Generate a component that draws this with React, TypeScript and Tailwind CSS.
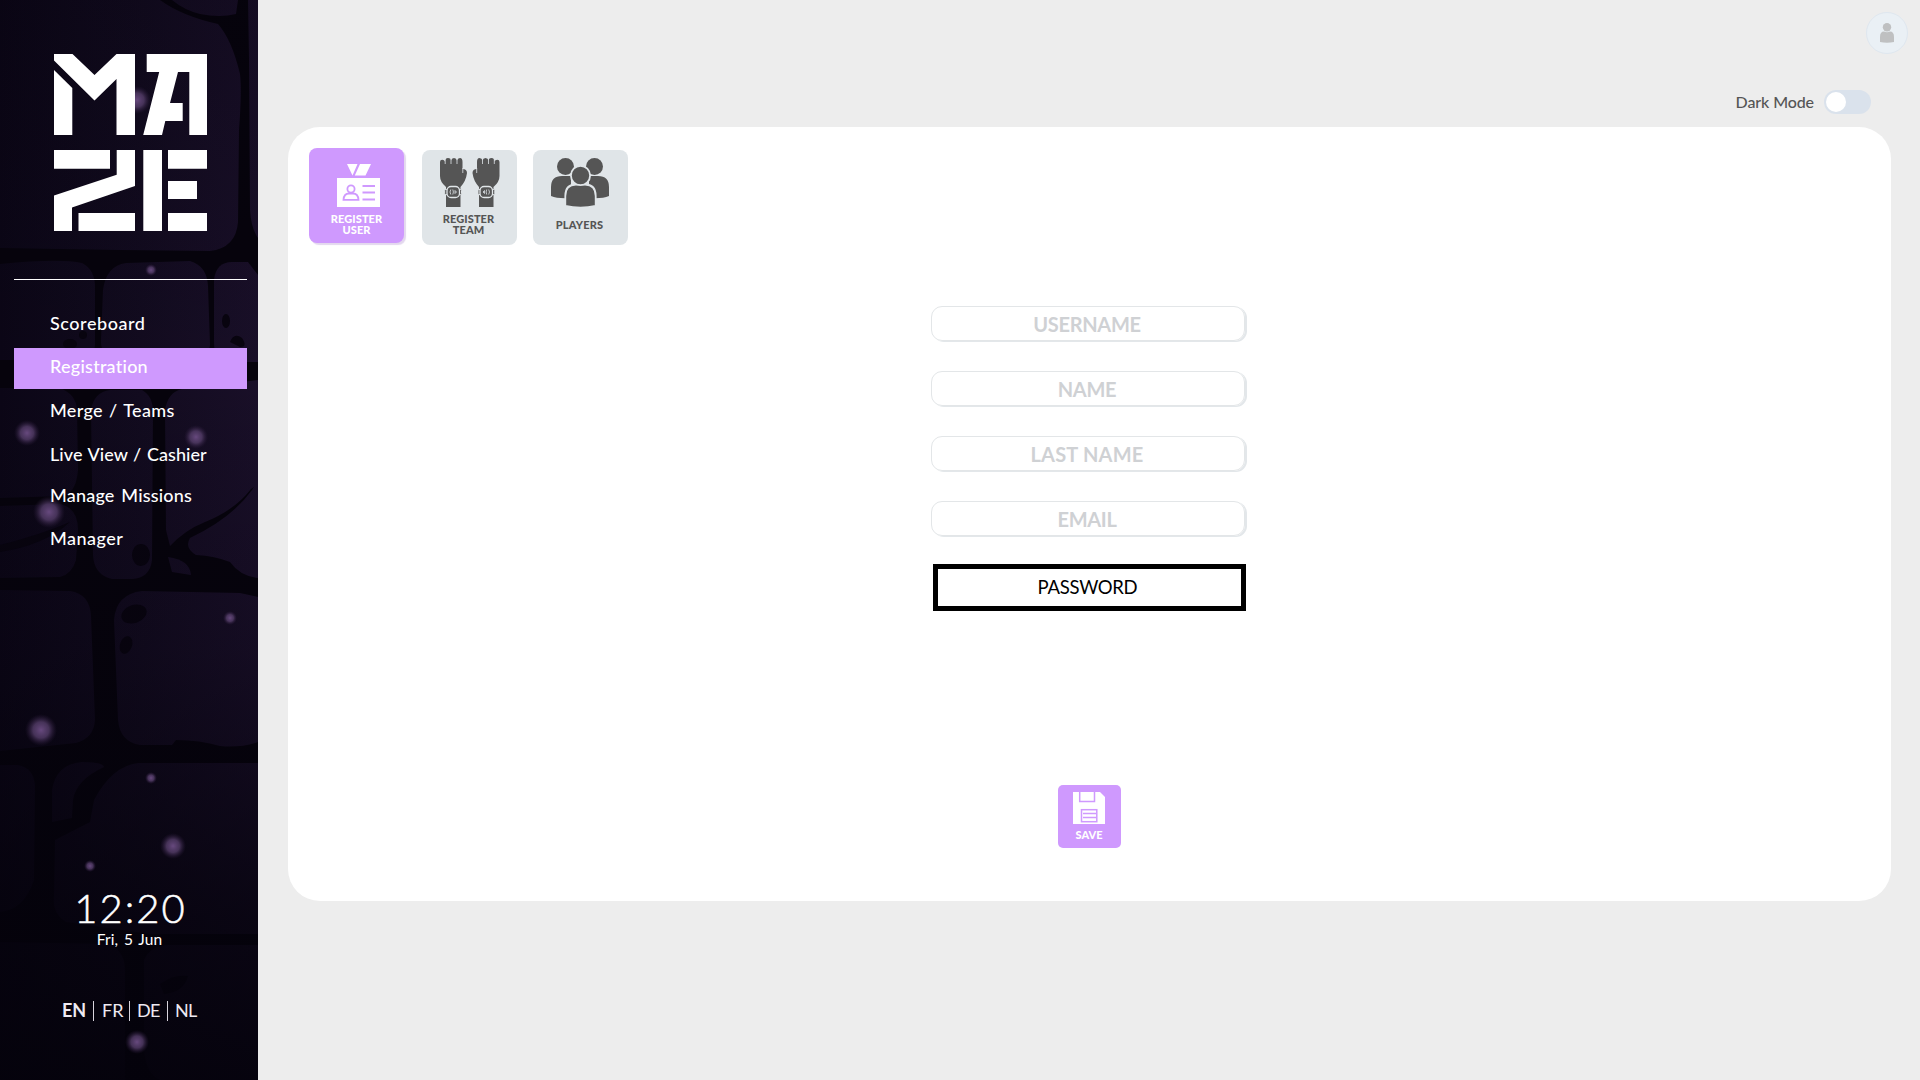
import React from "react";

const orbs: [number, number, number][] = [
  [137, 100, 14], [151, 270, 6], [27, 433, 13], [196, 437, 12], [49, 512, 16],
  [230, 618, 7], [41, 730, 16], [151, 778, 6], [173, 846, 13], [90, 866, 6], [137, 1042, 12],
];

function Wall() {
  return (
    <svg className="absolute inset-0" width="258" height="1080" viewBox="0 0 258 1080" aria-hidden="true">
      <defs>
        <linearGradient id="stone" gradientUnits="userSpaceOnUse" x1="0" y1="0" x2="258" y2="0">
          <stop offset="0" stopColor="#0b0616" />
          <stop offset="0.55" stopColor="#120b1f" />
          <stop offset="1" stopColor="#190f28" />
        </linearGradient>
        <linearGradient id="fade" x1="0" y1="0" x2="0" y2="1">
          <stop offset="0" stopColor="#04020b" stopOpacity="0.2" />
          <stop offset="0.35" stopColor="#04020b" stopOpacity="0" />
          <stop offset="0.6" stopColor="#04020b" stopOpacity="0.2" />
          <stop offset="0.85" stopColor="#04020b" stopOpacity="0.72" />
          <stop offset="1" stopColor="#04020b" stopOpacity="0.9" />
        </linearGradient>
        <radialGradient id="orb">
          <stop offset="0" stopColor="#67497e" />
          <stop offset="0.5" stopColor="#503a64" stopOpacity="0.85" />
          <stop offset="1" stopColor="#2c1b3c" stopOpacity="0" />
        </radialGradient>
      </defs>
      <rect width="258" height="1080" fill="#06030c" />
      <g fill="url(#stone)">
        <path d="M0 0H160Q182 16 218 24Q232 40 240 74Q242 90 239 130L238 222Q236 248 210 251L120 250L0 248Z" />
        <path d="M172 0H238L236 14Q220 18 200 14Q184 10 172 0Z" />
        <path d="M248 0H258V238Q251 228 250 210L249 60Z" />
        <path d="M0 264Q60 258 82 263Q96 270 95 290L95 345Q94 359 78 360H0Z" />
        <path d="M103 290Q106 266 126 263L190 261Q207 266 208 286L210 345Q208 360 195 360L118 360Q100 356 101 340Z" />
        <path d="M214 280Q216 262 232 262H248L258 275V362H222Q214 360 214 340Z" />
        <path d="M0 388H60Q76 394 77 410L78 470Q76 494 62 496L0 498Z" />
        <path d="M0 506L60 504Q78 508 78 530L76 560Q72 574 60 577L0 578Z" />
        <path d="M91 410Q94 392 110 390H142Q153 396 153 412L152 560Q150 578 132 579H112Q94 575 93 555Z" />
        <path d="M165 410Q168 392 182 389L258 380V484L251 489Q235 510 205 522Q185 530 170 546L166 530Z" />
        <path d="M258 480V578Q240 576 230 562Q215 556 196 555Q184 548 190 538Q232 518 252 490Z" />
        <path d="M168 557Q190 560 191 575L172 572Z" />
        <path d="M0 590L70 591Q90 594 91 616L95 720Q94 738 76 743L0 751Z" />
        <path d="M114 620Q116 594 142 591L240 593L258 597V742Q240 748 220 746Q200 740 176 740L172 745L140 745Q120 742 118 720Z" />
        <path d="M0 765H18Q34 768 35 786L34 880Q24 910 0 912Z" />
        <path d="M52 790Q56 764 82 762Q103 762 104 767Q76 780 73 800L72 818L52 822Z" />
        <path d="M94 800Q112 766 138 763H258V934H150L66 922Q52 914 54 896L55 840L90 822Z" />
        <path d="M0 942L110 944Q125 952 125 970V1080H0Z" />
        <path d="M144 960Q150 946 168 945H258V1080H160Q146 1074 144 1050Z" />
      </g>
      <g fill="#08040f">
        <ellipse cx="226" cy="321" rx="4" ry="7" />
        <path d="M230 342Q234 332 242 338Q248 347 240 347Z" />
        <ellipse cx="70" cy="344" rx="7" ry="5" />
        <ellipse cx="83" cy="335" rx="4" ry="4" />
        <ellipse cx="141" cy="555" rx="9" ry="11" />
        <path d="M0 545Q40 535 70 522Q45 545 0 552Z" />
        <ellipse cx="134" cy="614" rx="13" ry="9" transform="rotate(-20 134 614)" />
        <ellipse cx="126" cy="645" rx="6" ry="9" transform="rotate(20 126 645)" />
        <path d="M160 984Q174 974 188 976Q184 992 164 994Z" />
      </g>
      <rect width="258" height="1080" fill="url(#fade)" />
      {orbs.map(([x, y, r]) => <circle key={`${x}-${y}`} cx={x} cy={y} r={r} fill="url(#orb)" />)}
    </svg>
  );
}

function Logo() {
  return (
    <svg className="ml-[54px] mt-[54px] block" width="153" height="177" viewBox="54 54 153 177" fill="#fff" role="img" aria-label="Maze">
      <path d="M54 54H72.5L94.5 75L116.5 54H135V135H116.5V79L94.5 100.5L54 60.5Z" />
      <path d="M54 70L72.3 88V135H54Z" />
      <path d="M146.7 54H207V135H189.3V72H178L170 103H182.7V121H165.3L162 135H143.2L159.2 72H146.7Z" />
      <path d="M54 150H110V168.7H54Z" />
      <path d="M116.7 150H135V186L72 207.5V231H54V195.5L116.7 174.7Z" />
      <path d="M78.5 213H135V231H78.5Z" />
      <path d="M143.3 150H162V231H143.3Z" />
      <path d="M168 150H207V168.7H168ZM168 181H197V199H168ZM168 213H207V231H168Z" />
    </svg>
  );
}

const nav = [
  { label: "Scoreboard", cls: "h-[42px] pb-[5px] mb-px tracking-[0.55px]" },
  { label: "Registration", cls: "h-[41px] pb-[5px] bg-[#cf99fe] tracking-[0.25px]" },
  { label: "Merge / Teams", cls: "h-[43px] pb-px tracking-[0.35px] [word-spacing:1.2px]" },
  { label: "Live View / Cashier", cls: "h-[46px] pb-px tracking-[0.05px] [word-spacing:1px]" },
  { label: "Manage Missions", cls: "h-[37px] pb-[2px] tracking-[0.2px] [word-spacing:2px]" },
  { label: "Manager", cls: "h-[48px] pb-px tracking-[0.5px]" },
];

function BadgeIcon() {
  return (
    <svg className="mt-4 ml-[4px] block" width="44" height="43" viewBox="0 0 44 43">
      <path d="M10 0H20.5L15.5 11.5ZM23 0H34L28.5 11.5H17.8ZM0 14H43V43H0Z" fill="#fff" />
      <g fill="none" stroke="#cf99fe" strokeWidth="1.8">
        <circle cx="14" cy="25" r="3.6" />
        <path d="M6.5 35.8Q7 29.5 12 29.5H16Q21 29.5 21.5 35.8Z" />
        <path d="M25.5 22H38M25.5 28.5H38M25.5 35.5H38" strokeWidth="2.2" />
      </g>
    </svg>
  );
}

function Hand() {
  return (
    <g>
      <path d="M0 4Q0 1.7 2.2 1.7T5 3.5Q5 0 8 0T11 2.5Q11.5 0 14 0T17 2.5Q17.5 0 20 0T22.5 4V11Q27 11 27 15Q26 23 20.5 29V49H6V29Q0 24 0 18Z" fill="#555" />
      <path d="M5.2 1V6M11 1V6M17 1V6M22.8 10V15" stroke="#e0e5e8" strokeWidth="0.8" />
      <rect x="4.7" y="31.5" width="3" height="5" rx="1" fill="#555" stroke="#e0e5e8" />
      <rect x="18.5" y="31.5" width="3" height="5" rx="1" fill="#555" stroke="#e0e5e8" />
      <rect x="7" y="28.5" width="12.5" height="11" rx="4" fill="#555" stroke="#e0e5e8" strokeWidth="1.3" />
      <path d="M10.8 31.5Q9.2 34 10.8 36.5M12.8 31.5Q14 34 12.8 36.5M15 32.5L16.5 34L15 35.5Z" fill="none" stroke="#e0e5e8" strokeWidth="0.8" />
    </g>
  );
}

function HandsIcon() {
  return (
    <svg className="mt-2 block" width="60" height="49" viewBox="0 0 60 49">
      <Hand />
      <g transform="translate(59.5 0) scale(-1 1)"><Hand /></g>
    </svg>
  );
}

function PlayersIcon() {
  return (
    <svg className="mt-[8px] -ml-[2px] block" width="58" height="49" viewBox="0 0 58 49" fill="#555">
      <circle cx="14.5" cy="8.5" r="8.5" />
      <circle cx="43.5" cy="8.5" r="8.5" />
      <path d="M0 38V29Q0 18 11 18H20V40Q7 41 0 38ZM58 38V29Q58 18 47 18H38V40Q51 41 58 38Z" />
      <g stroke="#e0e5e8" strokeWidth="1.8">
        <path d="M14.3 48V38Q14.3 26.5 25 26.5H34Q44.7 26.5 44.7 38V48Q29.5 51.5 14.3 48Z" />
        <circle cx="29.5" cy="17.5" r="9.6" />
      </g>
    </svg>
  );
}

function Field({ label, cls }: { label: string; cls: string }) {
  return (
    <div className="mr-[3px] mb-[30px] flex h-[35px] w-[314px] items-center justify-center rounded-[11px] border border-[#e3e6e8] pr-[2px] shadow-[2px_1px_0_#e3e7ea]">
      <span className={`text-[20px] leading-none font-bold text-[#cfd1d4] ${cls}`}>{label}</span>
    </div>
  );
}

export default function App() {
  return (
    <div className="flex h-[1080px] w-[1920px] overflow-hidden bg-[#ededed] font-['Lato',sans-serif]">
      <aside className="relative h-full w-[258px] shrink-0 overflow-hidden text-white">
        <Wall />
        <div className="relative flex h-full flex-col">
          <Logo />
          <div className="mt-12 ml-[14px] h-px w-[233px] bg-white" />
          <nav className="mt-[25px] ml-[14px] w-[233px]">
            {nav.map((n) => (
              <a key={n.label} className={`flex items-center pl-9 text-[18px] font-medium whitespace-nowrap ${n.cls}`}>{n.label}</a>
            ))}
          </nav>
          <div className="mt-auto flex flex-col items-center pl-[3px]">
            <div className="text-[40px] leading-[41px] font-light tracking-[2px] [-webkit-text-stroke:0.5px_white]">12:20</div>
            <div className="-ml-[2px] text-[15.5px] leading-5 tracking-[0.15px] [word-spacing:1.5px]">Fri, 5 Jun</div>
          </div>
          <div className="mt-[49px] mb-[58px] flex h-6 items-center pl-[62px] text-[18px] leading-6 text-[#eeeaf2]">
            <b className="w-[31px]">EN</b>
            <i className="mt-[2px] h-5 w-px bg-[#d8d4dd]" />
            <span className="w-[35px] pl-2">FR</span>
            <i className="mt-[2px] h-5 w-px bg-[#d8d4dd]" />
            <span className="w-[37px] pl-[7px] tracking-[-0.8px]">DE</span>
            <i className="mt-[2px] h-5 w-px bg-[#d8d4dd]" />
            <span className="pl-[7px] tracking-[-0.8px]">NL</span>
          </div>
        </div>
      </aside>

      <main className="flex flex-1 flex-col pl-[30px]">
        <header className="h-[127px] shrink-0">
          <div className="flex justify-end pt-3 pr-3">
            <div className="flex size-[42px] items-center justify-center rounded-full border border-[#dfe7ef] bg-[#eaf0f5]">
              <svg className="-ml-px" width="14" height="20" viewBox="0 0 14 20" fill="#bfc0c1">
                <circle cx="7" cy="4.2" r="4.2" />
                <path d="M0 19V14Q0 8.5 4 8.5Q7 10 10 8.5Q14 8.5 14 14V19Q7 20.3 0 19Z" />
              </svg>
            </div>
          </div>
          <div className="mt-9 flex h-6 items-center justify-end pr-[49px]">
            <span className="mr-[10px] text-[16px] leading-6 font-medium tracking-[-0.1px] text-[#555]">Dark Mode</span>
            <div className="flex h-6 w-[47px] items-center rounded-full bg-[#dae2ec] pl-[2px]">
              <div className="size-5 rounded-full bg-white" />
            </div>
          </div>
        </header>

        <section className="flex h-[774px] w-[1603px] flex-col rounded-[32px] bg-white">
          <div className="flex h-[118px] items-start pt-[21px] pl-[21px] text-center text-[11px] leading-[11px] font-black">
            <button className="flex size-[95px] flex-col items-center rounded-[8px] bg-[#cf99fe] text-white shadow-[2px_2px_1px_#e3d8ee]">
              <BadgeIcon />
              <span className="mt-[6px] w-[70px] tracking-[0.1px]">REGISTER USER</span>
            </button>
            <button className="mt-[2px] ml-[18px] flex size-[95px] flex-col items-center rounded-[8px] bg-[#e0e5e8] text-[#555]">
              <HandsIcon />
              <span className="mt-[6px] -ml-[2px] w-[70px] tracking-[0.1px]">REGISTER TEAM</span>
            </button>
            <button className="mt-[2px] ml-4 flex size-[95px] flex-col items-center rounded-[8px] bg-[#e0e5e8] text-[#555]">
              <PlayersIcon />
              <span className="mt-[12px] -ml-[2px] tracking-[0.2px]">PLAYERS</span>
            </button>
          </div>

          <form className="mt-[61px] flex flex-col items-center">
            <Field label="USERNAME" cls="tracking-[-0.3px]" />
            <Field label="NAME" cls="tracking-[-0.3px]" />
            <Field label="LAST NAME" cls="tracking-[0.2px]" />
            <Field label="EMAIL" cls="tracking-[-0.3px]" />
            <div className="-mt-[2px] flex h-[47px] w-[313px] items-center justify-center border-[5px] border-black pr-1 text-[18.5px] leading-none text-black">
              <span className="tracking-[-0.3px]">PASSWORD</span>
            </div>
            <button type="button" className="mt-[174px] flex size-[63px] flex-col items-center rounded-[5px] bg-[#cf99fe] text-white">
              <svg className="mt-[7px] -ml-px block" width="32" height="32" viewBox="0 0 32 32">
                <path d="M0 0H27L32 5V32H0Z" fill="#fff" />
                <g fill="none" stroke="#cf99fe" strokeWidth="1.5">
                  <path d="M6.7 0V9.5H21.5V0" />
                  <rect x="8.5" y="17.7" width="15.3" height="12" />
                  <path d="M10 21.5H23M10 25.5H23" />
                </g>
              </svg>
              <span className="mt-[5px] -ml-px text-[11px] leading-[11px] font-black">SAVE</span>
            </button>
          </form>
        </section>
      </main>
    </div>
  );
}
